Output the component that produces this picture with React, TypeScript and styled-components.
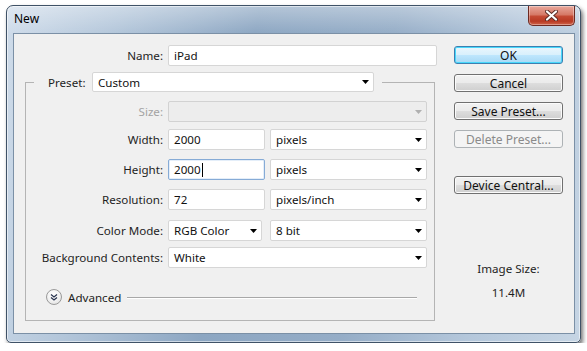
import React from "react";
import styled, { createGlobalStyle, css } from "styled-components";

const GlobalStyle = createGlobalStyle`
  html, body { margin: 0; padding: 0; background: #ffffff; }
  body {
    font-family: "Noto Sans", "Open Sans", "DejaVu Sans", sans-serif;
    font-size: 11.6px;
    color: #1e1e1e;
  }
  * { box-sizing: border-box; }
`;

const Window = styled.div`
  margin: 5px 0 0 6px;
  width: 575px;
  height: 338px;
  border: 1px solid #3f5267;
  border-radius: 7px 7px 5px 5px;
  background:
    linear-gradient(to bottom, rgba(255, 255, 255, 0.35) 0%, rgba(255, 255, 255, 0) 28px),
    linear-gradient(100deg, #cfdcea 0%, #b3c6da 18%, #8ca6c2 40%, #95adc7 62%, #b4c7db 82%, #c6d5e4 100%);
  box-shadow:
    inset 0 0 0 1px rgba(255, 255, 255, 0.55),
    2px 3px 4px rgba(0, 0, 0, 0.55);
  padding: 0 5px 8px 6px;
  display: flex;
  flex-direction: column;
`;

const TitleBar = styled.div`
  height: 27px;
  display: flex;
  align-items: flex-start;
`;

const Title = styled.div`
  padding: 5px 0 0 1px;
  line-height: 16px;
  font-size: 12px;
  color: #000;
`;

const CloseButton = styled.div`
  margin-left: auto;
  width: 47px;
  height: 20px;
  border: 1px solid #6d2a22;
  border-top: none;
  border-radius: 0 0 5px 5px;
  background: linear-gradient(to bottom, #e8a89c 0%, #d67a68 45%, #c44a34 55%, #b83a24 80%, #d0644a 100%);
  box-shadow: inset 0 0 0 1px rgba(255, 255, 255, 0.35);
  display: flex;
  align-items: center;
  justify-content: center;
`;

const Client = styled.div`
  flex: 1;
  background: #f0f0f0;
  border: 1px solid #7b90a6;
  display: flex;
`;

const LeftColumn = styled.div`
  width: 428px;
  display: flex;
  flex-direction: column;
`;

const Row = styled.div<{ $mt?: number }>`
  display: flex;
  align-items: center;
  height: 21px;
  margin-top: ${(p) => p.$mt ?? 0}px;
`;

const Label = styled.div<{ $w: number; $disabled?: boolean }>`
  width: ${(p) => p.$w}px;
  margin-right: 5px;
  text-align: right;
  white-space: nowrap;
  color: ${(p) => (p.$disabled ? "#a3a3a3" : "#1e1e1e")};
`;

const fieldBase = css`
  height: 21px;
  border: 1px solid #d6d6d6;
  border-radius: 2px;
  background: #ffffff;
  display: flex;
  align-items: center;
  padding: 0 0 0 5px;
  color: #111;
  white-space: nowrap;
`;

const TextField = styled.div<{ $w: number; $focused?: boolean }>`
  ${fieldBase};
  width: ${(p) => p.$w}px;
  ${(p) =>
    p.$focused &&
    css`
      border-color: #86abd6;
      box-shadow: inset 0 0 0 1px #e4eef9;
    `}
`;

const Caret = styled.span`
  display: inline-block;
  width: 1px;
  height: 14px;
  background: #000;
  margin-left: 1px;
`;

const SelectBox = styled.div<{ $w: number; $disabled?: boolean; $h?: number }>`
  ${fieldBase};
  width: ${(p) => p.$w}px;
  height: ${(p) => p.$h ?? 21}px;
  padding-right: 4px;
  justify-content: space-between;
  ${(p) =>
    p.$disabled &&
    css`
      background: #ededed;
      border-color: #d2d2d2;
    `}
`;

const Gap = styled.div<{ $w: number }>`
  width: ${(p) => p.$w}px;
  flex: none;
`;

const Group = styled.fieldset`
  margin: 6px 0 0 11px;
  width: 410px;
  border: 1px solid #b4b4b4;
  padding: 0 0 15px 8px;
  min-width: 0;
`;

const Legend = styled.legend`
  padding: 0 8px 0 14px;
  display: flex;
  align-items: center;
  height: 20px;
`;

const LegendLabel = styled.div`
  width: 44px;
  color: #1e1e1e;
`;

const AdvancedRow = styled.div`
  display: flex;
  align-items: center;
  height: 16px;
  margin: 21px 17px 0 12px;
`;

const AdvancedToggle = styled.div`
  width: 16px;
  height: 16px;
  border-radius: 50%;
  border: 1px solid #9a9a9a;
  background: radial-gradient(circle at 45% 35%, #ffffff 0%, #f2f2f2 50%, #d9d9d9 100%);
  display: flex;
  align-items: center;
  justify-content: center;
  flex: none;
`;

const AdvancedText = styled.div`
  margin: 0 6px 0 6px;
  color: #1e1e1e;
`;

const Rule = styled.div`
  flex: 1;
  height: 1px;
  background: #a8a8a8;
  box-shadow: 0 1px 0 #ffffff;
`;

const RightColumn = styled.div`
  margin-left: auto;
  margin-right: 11px;
  width: 109px;
  padding-top: 12px;
  display: flex;
  flex-direction: column;
  align-items: stretch;
`;

const Button = styled.div<{ $mt?: number; $default?: boolean; $disabled?: boolean }>`
  height: 18px;
  margin-top: ${(p) => p.$mt ?? 0}px;
  border: 1px solid #707070;
  border-radius: 3px;
  background: linear-gradient(to bottom, #f2f2f2 0%, #ebebeb 48%, #dddddd 52%, #cfcfcf 100%);
  box-shadow: inset 0 0 0 1px #fbfbfb;
  display: flex;
  align-items: center;
  justify-content: center;
  color: #111;
  font-size: 12px;
  white-space: nowrap;
  ${(p) =>
    p.$default &&
    css`
      border-color: #3c7fb1;
      background: linear-gradient(to bottom, #eaf6fd 0%, #d9f0fc 48%, #bee6fd 52%, #a7d9f5 100%);
      box-shadow: inset 0 0 0 1px #48d8fb;
    `}
  ${(p) =>
    p.$disabled &&
    css`
      border-color: #adb2b5;
      background: #f4f4f4;
      box-shadow: none;
      color: #8a8a8a;
    `}
`;

const InfoText = styled.div<{ $mt: number }>`
  margin-top: ${(p) => p.$mt}px;
  text-align: center;
  line-height: 14px;
  color: #1e1e1e;
`;

const Arrow = ({ disabled }: { disabled?: boolean }) => (
  <svg width="7" height="4" viewBox="0 0 7 4" style={{ flex: "none" }}>
    <path d="M0 0h7L3.5 4z" fill={disabled ? "#b0b0b0" : "#000"} />
  </svg>
);

const Select = ({ w, value, disabled, h }: { w: number; value?: string; disabled?: boolean; h?: number }) => (
  <SelectBox $w={w} $disabled={disabled} $h={h}>
    <span>{value ?? ""}</span>
    <Arrow disabled={disabled} />
  </SelectBox>
);

const CloseIcon = () => (
  <svg width="13" height="11" viewBox="0 0 13 11">
    <path d="M2 1.5L11 9.5M11 1.5L2 9.5" stroke="#5a2a24" strokeWidth="4" strokeLinecap="round" />
    <path d="M2 1.5L11 9.5M11 1.5L2 9.5" stroke="#ffffff" strokeWidth="2.2" strokeLinecap="round" />
  </svg>
);

const ChevronIcon = () => (
  <svg width="8" height="8" viewBox="0 0 8 8">
    <path d="M1 1.5L4 4L7 1.5M1 4.5L4 7L7 4.5" stroke="#2a3550" strokeWidth="1.3" fill="none" />
  </svg>
);

const ROW_LABEL = 129;

export default function App() {
  return (
    <>
      <GlobalStyle />
      <Window>
        <TitleBar>
          <Title>New</Title>
          <CloseButton>
            <CloseIcon />
          </CloseButton>
        </TitleBar>
        <Client>
          <LeftColumn>
            <Row $mt={11}>
              <Label $w={149}>Name:</Label>
              <TextField $w={269}>iPad</TextField>
            </Row>
            <Group>
              <Legend>
                <LegendLabel>Preset:</LegendLabel>
                <Select w={282} h={20} value="Custom" />
              </Legend>
              <Row $mt={9}>
                <Label $w={ROW_LABEL} $disabled>
                  Size:
                </Label>
                <Select w={259} disabled />
              </Row>
              <Row $mt={7}>
                <Label $w={ROW_LABEL}>Width:</Label>
                <TextField $w={97}>2000</TextField>
                <Gap $w={5} />
                <Select w={157} value="pixels" />
              </Row>
              <Row $mt={9}>
                <Label $w={ROW_LABEL}>Height:</Label>
                <TextField $w={97} $focused>
                  2000
                  <Caret />
                </TextField>
                <Gap $w={5} />
                <Select w={157} value="pixels" />
              </Row>
              <Row $mt={9}>
                <Label $w={ROW_LABEL}>Resolution:</Label>
                <TextField $w={97}>72</TextField>
                <Gap $w={5} />
                <Select w={157} value="pixels/inch" />
              </Row>
              <Row $mt={10}>
                <Label $w={ROW_LABEL}>Color Mode:</Label>
                <Select w={94} value="RGB Color" />
                <Gap $w={8} />
                <Select w={157} value="8 bit" />
              </Row>
              <Row $mt={6}>
                <Label $w={ROW_LABEL}>Background Contents:</Label>
                <Select w={259} value="White" />
              </Row>
              <AdvancedRow>
                <AdvancedToggle>
                  <ChevronIcon />
                </AdvancedToggle>
                <AdvancedText>Advanced</AdvancedText>
                <Rule />
              </AdvancedRow>
            </Group>
          </LeftColumn>
          <RightColumn>
            <Button $default>OK</Button>
            <Button $mt={10}>Cancel</Button>
            <Button $mt={10}>Save Preset...</Button>
            <Button $mt={10} $disabled>
              Delete Preset...
            </Button>
            <Button $mt={28}>Device Central...</Button>
            <InfoText $mt={68}>Image Size:</InfoText>
            <InfoText $mt={10}>11.4M</InfoText>
          </RightColumn>
        </Client>
      </Window>
    </>
  );
}
